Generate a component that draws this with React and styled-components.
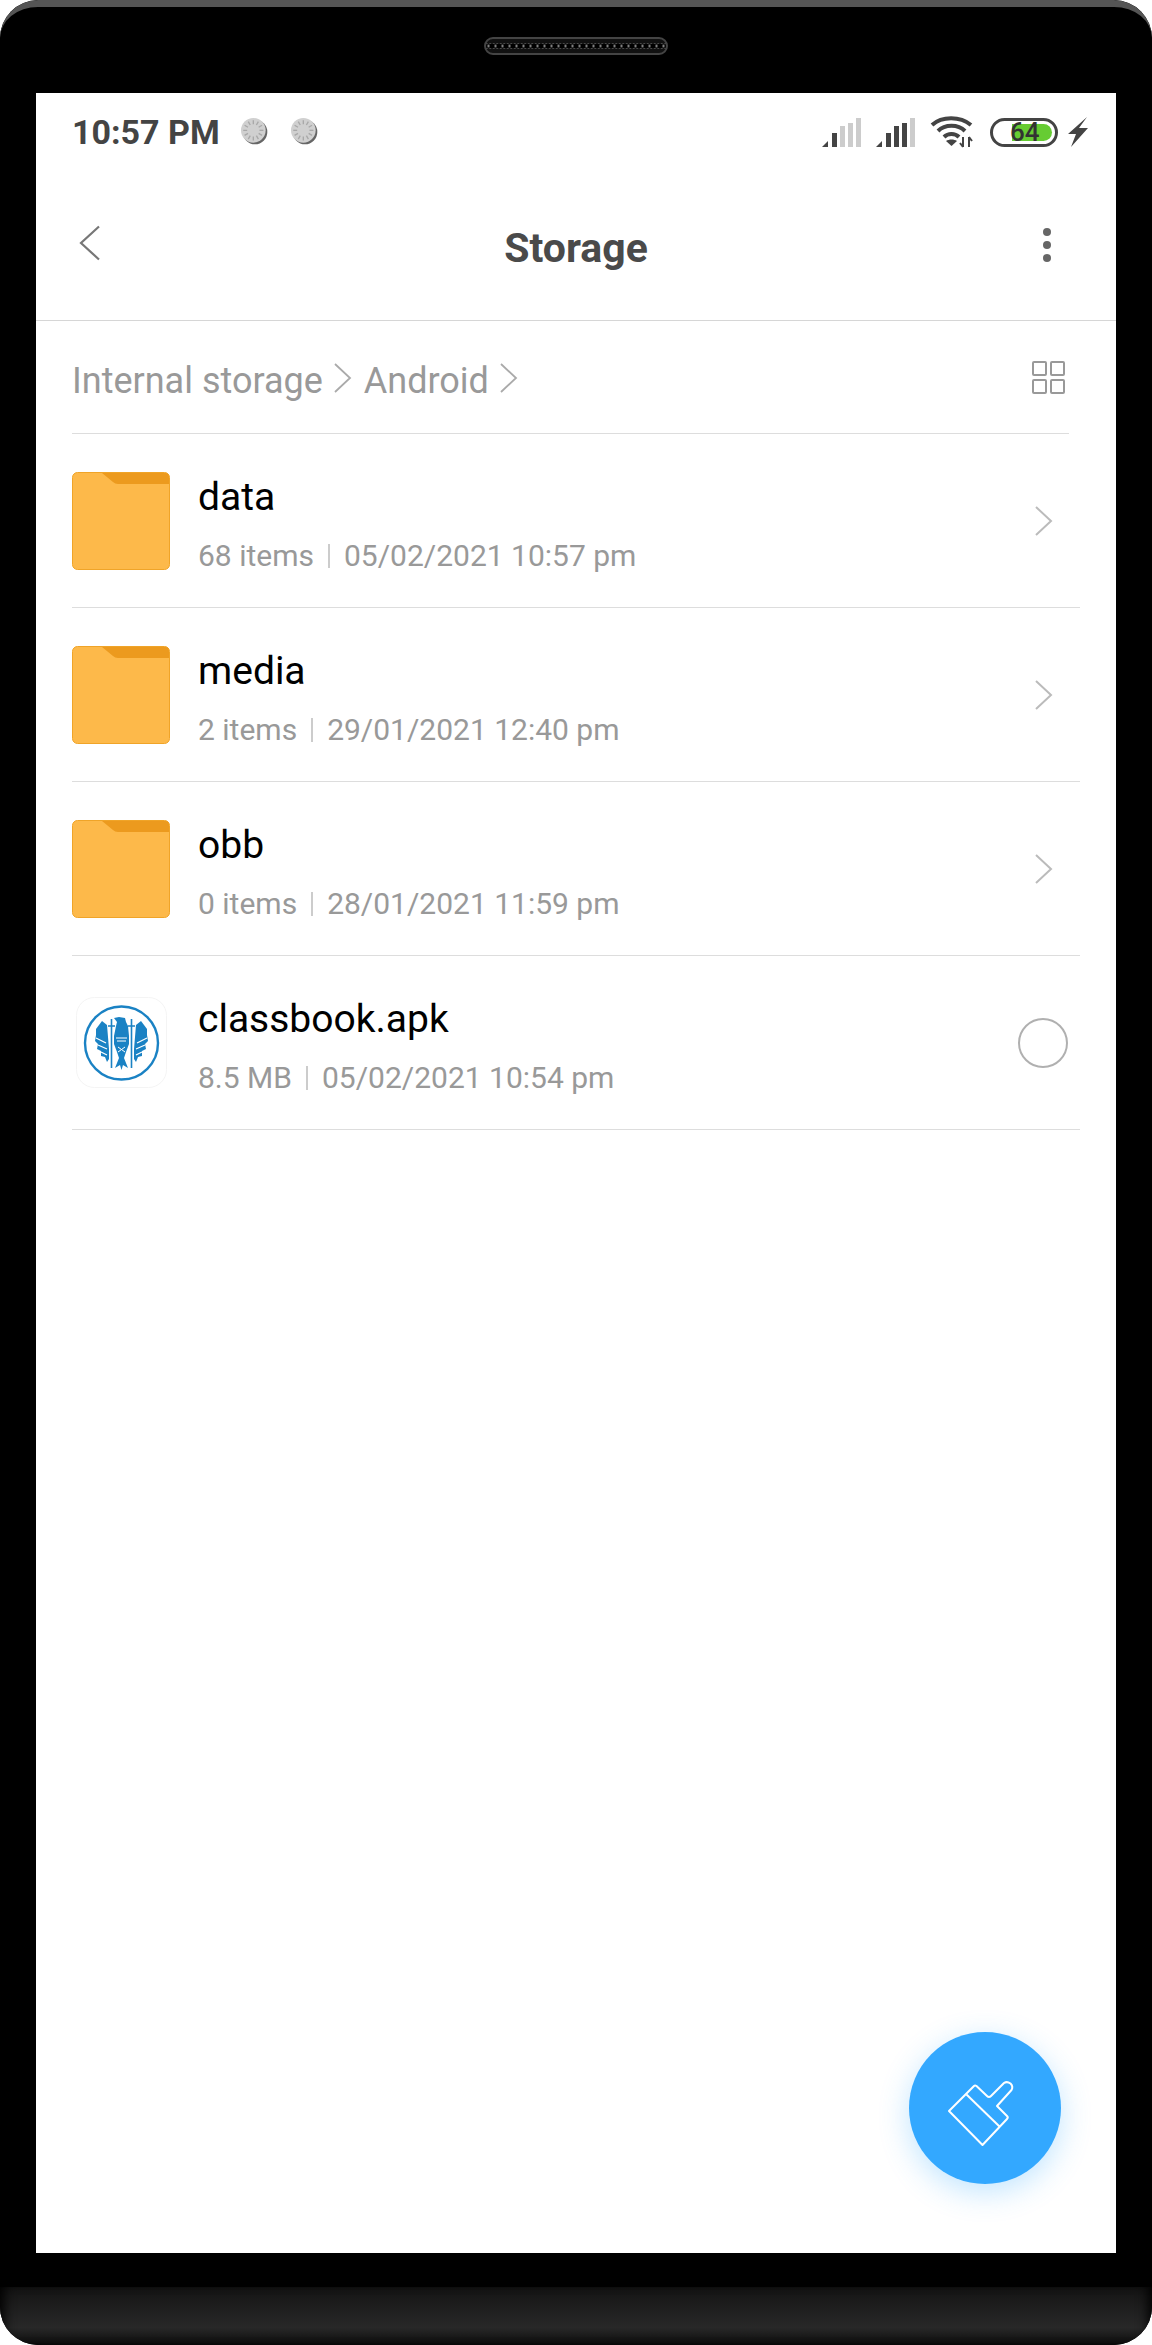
import styled, { createGlobalStyle } from "styled-components";

const GlobalStyle = createGlobalStyle`
    html, body {
        margin: 0;
        padding: 0;
        background: #FFFFFF;
    }

    * {
        box-sizing: border-box;
    }
`

const files = [
    { name: "data", meta: "68 items", date: "05/02/2021 10:57 pm" },
    { name: "media", meta: "2 items", date: "29/01/2021 12:40 pm" },
    { name: "obb", meta: "0 items", date: "28/01/2021 11:59 pm" },
    { name: "classbook.apk", meta: "8.5 MB", date: "05/02/2021 10:54 pm", apk: true },
];

function Signal({ level }) {
    const bars = [
        { x: 11, h: 14 },
        { x: 19, h: 21 },
        { x: 27, h: 24 },
        { x: 35, h: 29 },
    ];
    return (
        <svg width="40" height="29" viewBox="0 0 40 29">
            <path d="M0 29 L6 23 V29 Z" fill="#444444" />
            {bars.map((b, i) => (
                <rect key={b.x} x={b.x - 1} y={29 - b.h} width="5" height={b.h} fill={i < level ? "#444444" : "#CCCCCC"} />
            ))}
        </svg>
    )
}

function Wifi() {
    return (
        <svg width="44" height="32" viewBox="0 0 44 32" fill="none">
            <path d="M2 9 C12 0 30 0 41 9" stroke="#444444" strokeWidth="4" />
            <path d="M8 15 C15 8 28 8 35 15" stroke="#444444" strokeWidth="4" />
            <path d="M14 21 C18 17 25 17 29 21" stroke="#444444" strokeWidth="4" />
            <path d="M16 25 C19 23 24 23 27 25 L21.500 30 Z" fill="#444444" />
            <path d="M33 21 V31 M30 27 L33 31 M39 21 V31 M39 21 L42 25" stroke="#444444" strokeWidth="2" />
        </svg>
    )
}

function Spinner() {
    const ticks = [];
    for (let a = 0; a < 360; a += 30) {
        ticks.push(<line key={a} x1="11" y1="2" x2="11" y2="5.500" stroke="#A8A8A8" strokeWidth="1.200" transform={`rotate(${a} 11 11)`} />);
    }
    return (
        <svg width="28" height="28" viewBox="0 0 25 25">
            <circle cx="12.500" cy="12.500" r="11" fill="#666666" />
            <circle cx="11" cy="11" r="11" fill="#D0D0D0" />
            {ticks}
        </svg>
    )
}

function Folder() {
    return (
        <svg width="98" height="98" viewBox="0 0 98 98">
            <rect x="0.500" y="0.500" width="97" height="97" rx="5" fill="#FDB94A" stroke="#F0A428" />
            <path d="M30 1 H93 Q97 1 97 5 V12 H46 Q43 12 41 10 Z" fill="#EC9A1E" />
        </svg>
    )
}

function Crest() {
    return (
        <svg width="91" height="91" viewBox="0 0 91 91" fill="none">
            <rect x="0.500" y="0.500" width="90" height="90" rx="18" fill="#FFFFFF" stroke="#F4F4F4" />
            <circle cx="45.500" cy="46" r="36.500" stroke="#1A82C4" strokeWidth="2.400" />
            {/* head and body */}
            <path d="M38 21 L43 20 L49 21 L50 25 L52 29 L53 39 L53 47 L50 55 L48 61 L52 71 L47 68 L45.500 73 L44 68 L39 71 L43 61 L41 55 L38 47 L38 39 L40 29 L41 25 Z" fill="#1A82C4" />
            <path d="M40 41 H51 M41 44 H50 M42 50 L49 55 M49 50 L42 55" stroke="#FFFFFF" strokeWidth="1" />
            {/* wings */}
            <path d="M31 28 L26 24 L23 28 L20 32 L20 38 L19 44 L22 47 L21 52 L25 54 L25 59 L29 60 L31 65 L33 62 L33 52 Z" fill="#1A82C4" />
            <path d="M60 28 L65 24 L68 28 L71 32 L71 38 L72 44 L69 47 L70 52 L66 54 L66 59 L62 60 L60 65 L58 62 L58 52 Z" fill="#1A82C4" />
            <path d="M20 41 L30 46 M22 48 L31 52 M25 55 L31 58 M71 41 L61 46 M69 48 L60 52 M66 55 L60 58" stroke="#FFFFFF" strokeWidth="1.200" />
            {/* sceptres */}
            <path d="M35.500 24 V70 M55.500 24 V70" stroke="#FFFFFF" strokeWidth="4.500" />
            <path d="M35.500 22 V71 M55.500 22 V71 M32 29 H39 M52 29 H59" stroke="#1A82C4" strokeWidth="1.600" />
        </svg>
    )
}

function Brush() {
    return (
        <BrushIcon width="68" height="68" viewBox="-2 -2 68 68" fill="none" stroke="#FFFFFF" strokeWidth="2" strokeLinejoin="round">
            <path d="M0 30 L25 5 Q26 4 27.500 5 L38 15 Q40 17 42 15 L55 2 Q58 0 61.500 2.500 Q64.500 5.500 62.500 9 L48 25 L58 35 Q59.500 36.500 58 38 L33.500 64 Z" />
            <path d="M17.500 13.500 L50.500 45.500" />
        </BrushIcon>
    )
}

export default function App() {
    return (
        <>
            <GlobalStyle />
            <Phone>
                <TopBezel>
                    <Speaker />
                </TopBezel>

                <Screen>
                    <StatusBar>
                        <Time>10:57 PM</Time>
                        <Spinners>
                            <Spinner />
                            <Spinner />
                        </Spinners>
                        <StatusIcons>
                            <Signal level={1} />
                            <Signal level={3} />
                            <Wifi />
                            <Battery>
                                <BatteryFill />
                                <BatteryText>64</BatteryText>
                            </Battery>
                            <svg width="20" height="30" viewBox="0 0 20 30">
                                <path d="M19 0 L0 17 H8 L3 30 L20 11 H11 Z" fill="#444444" />
                            </svg>
                        </StatusIcons>
                    </StatusBar>

                    <TitleBar>
                        <BackSlot>
                            <svg width="22" height="36" viewBox="0 0 22 36" fill="none">
                                <path d="M20 1.500 L2 18 L20 34.500" stroke="#777777" strokeWidth="2.200" />
                            </svg>
                        </BackSlot>
                        <Title>Storage</Title>
                        <MenuSlot>
                            <Dots>
                                <span />
                                <span />
                                <span />
                            </Dots>
                        </MenuSlot>
                    </TitleBar>

                    <Breadcrumb>
                        <Crumb>Internal storage</Crumb>
                        <CrumbArrow />
                        <Crumb>Android</Crumb>
                        <CrumbArrow />
                        <GridIcon>
                            <span />
                            <span />
                            <span />
                            <span />
                        </GridIcon>
                    </Breadcrumb>

                    <FileList>
                        {files.map((file) => (
                            <FileRow key={file.name}>
                                {file.apk ? <CrestBox><Crest /></CrestBox> : <Folder />}
                                <FileInfo>
                                    <FileName>{file.name}</FileName>
                                    <FileMeta>
                                        {file.meta}
                                        <Bar />
                                        {file.date}
                                    </FileMeta>
                                </FileInfo>
                                {file.apk ? (
                                    <Radio />
                                ) : (
                                    <RowArrow>
                                        <svg width="18" height="30" viewBox="0 0 18 30" fill="none">
                                            <path d="M1 1 L16 15 L1 29" stroke="#BBBBBB" strokeWidth="2" />
                                        </svg>
                                    </RowArrow>
                                )}
                            </FileRow>
                        ))}
                    </FileList>

                    <Fab>
                        <Brush />
                    </Fab>
                </Screen>

                <Chin />
            </Phone>
        </>
    )
}

function CrumbArrow() {
    return (
        <CrumbArrowBox>
            <svg width="18" height="30" viewBox="0 0 18 30" fill="none">
                <path d="M1 1 L16 15 L1 29" stroke="#AAAAAA" strokeWidth="1.800" />
            </svg>
        </CrumbArrowBox>
    )
}

const Phone = styled.div`
    width: 1152px;
    height: 2345px;
    display: flex;
    flex-direction: column;
    background: #000000;
    border-radius: 38px;
    overflow: hidden;
    font-family: Roboto, "Liberation Sans", sans-serif;
`

const TopBezel = styled.div`
    height: 93px;
    flex-shrink: 0;
    background: #000000;
    border-top: 7px solid #555555;
    border-radius: 38px 38px 0 0;
    display: flex;
    justify-content: center;
    padding-top: 30px;
`

const Speaker = styled.div`
    width: 184px;
    height: 18px;
    border-radius: 9px;
    background-color: #111111;
    border: 2px solid #444444;
    background-image: radial-gradient(circle at center, #000000 2.500px, #8A8A8A 3px, #111111 3.500px);
    background-size: 7px 12px;
    background-position: center;
`

const Screen = styled.div`
    position: relative;
    width: 1080px;
    height: 2160px;
    margin: 0 auto;
    flex-shrink: 0;
    background: #FFFFFF;
`

const StatusBar = styled.div`
    height: 78px;
    display: flex;
    align-items: center;
    padding: 0 28px 0 36px;
`

const Time = styled.div`
    font-size: 34px;
    font-weight: 700;
    color: #444444;
`

const Spinners = styled.div`
    display: flex;
    gap: 22px;
    margin-left: 21px;
`

const StatusIcons = styled.div`
    margin-left: auto;
    display: flex;
    align-items: center;
    gap: 14px;
`

const Battery = styled.div`
    position: relative;
    width: 68px;
    height: 29px;
    margin: 0 -4px 0 2px;
    border: 3px solid #444444;
    border-radius: 15px;
    padding: 3px;
    display: flex;
    justify-content: flex-end;
`

const BatteryFill = styled.div`
    width: 40px;
    height: 100%;
    background: #66CC33;
    border-radius: 0 10px 10px 0;
`

const BatteryText = styled.div`
    position: absolute;
    left: 17px;
    top: -3px;
    font-size: 26px;
    line-height: 29px;
    font-weight: 500;
    color: #333333;
`

const TitleBar = styled.div`
    height: 150px;
    display: grid;
    grid-template-columns: 1fr auto 1fr;
    align-items: center;
    padding: 0 0 0 43px;
    border-bottom: 1px solid #D6D6D6;
`

const BackSlot = styled.div`
    display: flex;
    padding-bottom: 5px;
`

const MenuSlot = styled.div`
    display: flex;
    justify-content: flex-end;
    padding: 0 65px 1px 0;
`

const Title = styled.h1`
    margin: 0 0 0 -43px;
    padding-top: 5px;
    font-size: 41px;
    font-weight: 700;
    color: #4A4A4A;
`

const Dots = styled.div`
    width: 8px;
    display: flex;
    flex-direction: column;
    gap: 5px;

    span {
        width: 8px;
        height: 8px;
        border-radius: 50%;
        background: #666666;
    }
`

const Breadcrumb = styled.div`
    height: 113px;
    margin: 0 47px 0 36px;
    display: flex;
    align-items: center;
    border-bottom: 1px solid #DDDDDD;
`

const Crumb = styled.span`
    padding-top: 7px;
    font-size: 36px;
    color: #999999;
`

const CrumbArrowBox = styled.span`
    display: flex;
    margin: 1px 12px 0 11px;
`

const GridIcon = styled.div`
    margin-left: auto;
    margin-right: 4px;
    display: grid;
    grid-template-columns: 15px 15px;
    grid-auto-rows: 15px;
    gap: 3px;

    span {
        border: 2.500px solid #999999;
        border-radius: 2px;
    }
`

const FileList = styled.div`
    margin: 0 36px;
`

const FileRow = styled.div`
    height: 174px;
    display: flex;
    align-items: center;
    border-bottom: 1px solid #DDDDDD;
`

const CrestBox = styled.div`
    width: 98px;
    display: flex;
    justify-content: center;
`

const FileInfo = styled.div`
    margin-left: 28px;
    padding-top: 6px;
    flex: 1;
    display: flex;
    flex-direction: column;
    gap: 20px;
`

const FileName = styled.div`
    font-size: 39px;
    line-height: 44px;
    color: #000000;
`

const FileMeta = styled.div`
    display: flex;
    align-items: center;
    font-size: 30px;
    line-height: 34px;
    color: #999999;
`

const Bar = styled.span`
    width: 2px;
    height: 24px;
    margin: 0 14px;
    background: #CCCCCC;
`

const RowArrow = styled.div`
    display: flex;
    margin-right: 27px;
`

const Radio = styled.div`
    width: 50px;
    height: 50px;
    margin-right: 12px;
    border: 2px solid #B0B0B0;
    border-radius: 50%;
`

const Fab = styled.div`
    position: absolute;
    left: 873px;
    top: 1939px;
    width: 152px;
    height: 152px;
    border-radius: 50%;
    background: #33A8FF;
    box-shadow: 0 8px 30px rgba(51, 168, 255, 0.3);
    display: flex;
    align-items: center;
    justify-content: center;
`

const BrushIcon = styled.svg`
    margin: 10px 8px 0 0;
`

const Chin = styled.div`
    flex: 1;
    margin-top: 34px;
    background: linear-gradient(#141414, #282828 70%, #0C0C0C);
    box-shadow: inset 10px 0 12px -6px #000000, inset -10px 0 12px -6px #000000;
`
